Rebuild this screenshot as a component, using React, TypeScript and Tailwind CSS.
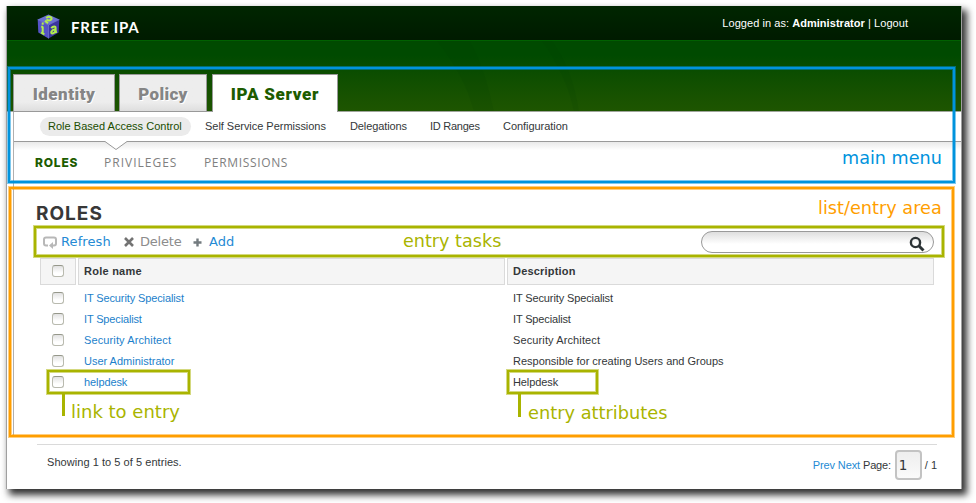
import type { ReactNode } from 'react';

const roles = [
  { name: 'IT Security Specialist', description: 'IT Security Specialist', tracking: 'tracking-[-0.12px]' },
  { name: 'IT Specialist', description: 'IT Specialist', tracking: 'tracking-[-0.15px]' },
  { name: 'Security Architect', description: 'Security Architect', tracking: 'tracking-[0.12px]' },
  { name: 'User Administrator', description: 'Responsible for creating Users and Groups', tracking: 'tracking-[-0.01px]' },
  { name: 'helpdesk', description: 'Helpdesk', tracking: 'tracking-[-0.1px]' },
];

const blueFrame = 'border-[#0093dd] shadow-[0_0_0_1px_rgba(0,147,221,0.5),inset_0_0_0_1px_rgba(0,147,221,0.5)]';
const orangeFrame = 'border-[#ff9e00] shadow-[0_0_0_1px_rgba(255,158,0,0.5),inset_0_0_0_1px_rgba(255,158,0,0.5)]';
const oliveFrame = 'border-[#a9b400] shadow-[0_0_0_1px_rgba(169,180,0,0.5),inset_0_0_0_1px_rgba(169,180,0,0.5)]';

function Frame({ className }: { className: string }) {
  return <div className={`pointer-events-none absolute border-2 ${className}`} />;
}

function Note({ className, children }: { className: string; children: ReactNode }) {
  return (
    <span className={`absolute font-['DejaVu_Sans',sans-serif] leading-[22px] tracking-normal whitespace-nowrap ${className}`}>
      {children}
    </span>
  );
}

function Checkbox() {
  return (
    <span className="block h-3 w-3 rounded-[3px] border border-[#b9baaf] border-t-[#95978a] bg-linear-to-b from-[#e2e2e2] to-white to-70%" />
  );
}

function Logo() {
  return (
    <svg className="block h-[25px] w-[23px]" viewBox="0 0 23 25">
      <path d="M11.5 0.5 22.3 5.5 11.5 11 0.7 5.5Z" fill="#6c70d4" />
      <path d="M0.7 5.5 11.5 11V24.5L1.3 18.5Z" fill="#5553c6" />
      <path d="M22.3 5.5 11.5 11V24.5L21.7 18.5Z" fill="#3b35a0" />
      <path d="M0.7 5.5 11.5 11 22.3 5.5M11.5 11V24.5" fill="none" stroke="#7b7fe0" strokeWidth=".7" />
      <g fill="none" stroke="#b2ee4c" strokeWidth="2">
        <path d="M8 6.8 11 9.2M9.2 4C11.5 1.6 15.6 3.2 14.4 5.2 13.4 7 10.4 6.6 9.6 5.4" />
        <path d="M5.7 12.5V19.5M5.7 8.6V10.8M4.2 12.3 5.7 13M4 18.5 7.4 20.4" />
        <path d="M14.2 14.2C16.2 12 18.6 11.7 18.6 14V18.2L20 17.8M18.4 15.2C14 15.6 13.2 19.8 15.6 19.5 17 19.3 18.4 17.8 18.4 16.6" />
      </g>
    </svg>
  );
}

export default function App() {
  return (
    <div className="relative h-[503px] w-[976px] overflow-hidden bg-white pt-[6px] pl-[6px] font-['Liberation_Sans',Arial,sans-serif] text-[11px] tracking-normal text-[#333739]">
      <div className="flex h-[483px] w-[956px] flex-col border-x border-[#a0a0a0] bg-white shadow-[4px_5px_7px_1px_rgba(0,0,0,0.8)]">
        <header className="flex h-[34px] shrink-0 items-start bg-linear-to-b from-[#002600] to-[#001b00] pt-[8px] text-white">
          <div className="ml-[30px]">
            <Logo />
          </div>
          <span className="ml-[11px] pt-[3px] font-['Lato',sans-serif] text-[15px] leading-[20px] font-bold tracking-[0.75px]">FREE IPA</span>
          <span className="mr-[53px] ml-auto leading-[18px] tracking-[0.05px] whitespace-pre">
            Logged in as: <b>Administrator</b> | Logout
          </span>
        </header>

        <div className="relative flex h-[72px] shrink-0 items-end overflow-hidden border-t border-[#006000] bg-linear-to-b from-[#004a00] from-20% to-[#1e5500] pl-[6px] font-['Roboto',sans-serif] text-[17px] font-black">
          <svg className="absolute inset-0 h-full w-full" viewBox="0 0 954 71">
            <path d="M430 0Q458 35 467 71H487Q479 30 463 0ZM535 0Q560 35 567 71H572Q566 28 545 0Z" fill="#003c00" opacity=".1" />
          </svg>
          <div className="absolute inset-x-0 bottom-0 h-px bg-[#a0a59c]" />
          <div className="relative flex h-[38px] w-[102px] items-center justify-center border border-[#999] bg-linear-to-b from-[#ededed] from-75% to-[#dedede] pt-[3px] tracking-[0.5px] text-[#858585] [text-shadow:1px_1px_0_#fff]">Identity</div>
          <div className="relative ml-[4px] flex h-[38px] w-[88px] items-center justify-center border border-[#999] bg-linear-to-b from-[#ededed] from-75% to-[#dedede] pt-[3px] tracking-[0.3px] text-[#858585] [text-shadow:1px_1px_0_#fff]">Policy</div>
          <div className="relative ml-[5px] flex h-[38px] w-[126px] items-center justify-center border border-b-0 border-[#999] bg-white pt-[3px] tracking-[0.7px] text-[#1d5c00]">IPA Server</div>
        </div>

        <div className="ml-[6px] flex h-[324px] shrink-0 flex-col border-l border-[#b0b0b0]">
          <nav className="flex h-[29px] shrink-0 items-center pl-[26px]">
            <span className="flex h-[19px] w-[151px] items-center rounded-full bg-[#ebebeb] pl-[8px] tracking-[0.02px] text-[#204d00]">Role Based Access Control</span>
            <span className="ml-[14px] w-[145px] tracking-[-0.03px]">Self Service Permissions</span>
            <span className="w-[80px] tracking-[-0.1px]">Delegations</span>
            <span className="w-[73px] tracking-[-0.25px]">ID Ranges</span>
            <span className="tracking-[-0.05px]">Configuration</span>
          </nav>
          <div className="relative flex h-[43px] shrink-0 items-center border-t border-[#999] bg-linear-to-b from-[#e9e9e9] to-white to-20% pl-[21px] font-['Open_Sans',sans-serif] text-[12px]">
            <svg className="absolute -top-px left-[91px] h-[9px] w-[22px]" viewBox="0 0 22 9">
              <path d="M0 0H22V.5L11 8.5 0 .5Z" fill="#fff" />
              <path d="M0 .5 11 8.5 22 .5" fill="none" stroke="#999" />
            </svg>
            <span className="w-[69px] font-['Inter',sans-serif] font-extrabold tracking-[0.8px] text-[#1d5c00]">ROLES</span>
            <span className="w-[100px] tracking-[1px] text-[#808080]">PRIVILEGES</span>
            <span className="tracking-[0.65px] text-[#808080]">PERMISSIONS</span>
          </div>

          <h1 className="ml-[22px] h-[43px] shrink-0 pt-[17px] font-['Inter',sans-serif] text-[19px] leading-[26px] font-bold tracking-[1px] text-[#383838]">ROLES</h1>

          <div className="flex h-[30px] shrink-0 items-center pl-[29px] font-['DejaVu_Sans',sans-serif] text-[13px] text-[#258ad4]">
            <svg className="h-[13px] w-[15px]" viewBox="0 0 15 13" fill="none" stroke="#b8b8b8" strokeWidth="2">
              <path d="M5 9.5H3Q1 9.5 1 7.5V3.5Q1 1.5 3 1.5H11Q13 1.5 13 3.5V7.5Q13 9.5 11 9.5H9" />
              <path d="M10 6V13L6 9.5Z" fill="#b8b8b8" stroke="none" />
            </svg>
            <span className="ml-[3px] w-[63px] tracking-[0.1px]">Refresh</span>
            <svg className="h-[10px] w-[10px]" viewBox="0 0 10 10" stroke="#737373" strokeWidth="2.6">
              <path d="M1 1 9 9M9 1 1 9" />
            </svg>
            <span className="ml-[6px] w-[53px] tracking-[-0.2px] text-[#8c8c8c]">Delete</span>
            <svg className="h-[9px] w-[9px]" viewBox="0 0 9 9" stroke="#737b7f" strokeWidth="2.4">
              <path d="M4.5 0.5V8.5M.5 4.5H8.5" />
            </svg>
            <span className="ml-[7px]">Add</span>
            <div className="mr-[27px] ml-auto flex h-[22px] w-[233px] items-center justify-end rounded-full border border-[#999] bg-linear-to-b from-[#dedede] to-white to-60% pt-[3px] pr-[8px]">
              <svg className="h-[16px] w-[16px]" viewBox="0 0 16 16" fill="none" stroke="#2d3437">
                <circle cx="6.5" cy="6.5" r="4.6" strokeWidth="2.4" />
                <path d="M9.8 9.8 14.5 14.5" strokeWidth="3" />
              </svg>
            </div>
          </div>

          <div className="mt-px ml-[26px] flex h-[27px] w-[894px] shrink-0 gap-[2px] font-bold">
            <div className="flex w-[36px] items-start justify-center border border-[#dadada] bg-[#f5f5f5] pt-[6px]"><Checkbox /></div>
            <div className="flex w-[427px] items-center border border-[#dadada] bg-[#f5f5f5] pl-[5px] tracking-[0.25px]">Role name</div>
            <div className="flex w-[427px] items-center border border-[#dadada] bg-[#f5f5f5] pl-[5px] tracking-[0.2px]">Description</div>
          </div>
          <div className="mt-[3px] ml-[38px] flex flex-col">
            {roles.map(({ name, description, tracking }) => (
              <div key={name} className={`flex h-[21px] items-start ${tracking}`}>
                <span className="pt-[4px]"><Checkbox /></span>
                <span className="ml-[20px] w-[429px] leading-[21px] text-[#1c7fcb]">{name}</span>
                <span className="leading-[21px]">{description}</span>
              </div>
            ))}
          </div>
        </div>

        <footer className="mt-[8px] ml-[30px] flex h-[44px] w-[900px] shrink-0 items-start border-t border-[#dadada] pl-[10px]">
          <span className="pt-[9px] leading-[16px] tracking-[0.05px]">Showing 1 to 5 of 5 entries.</span>
          <div className="ml-auto flex items-center pt-[5px]">
            <span className="tracking-[-0.12px] text-[#258ad4]">Prev Next</span>
            <span className="ml-[3px] tracking-[-0.2px]">Page:</span>
            <span className="ml-[4px] flex h-[30px] w-[27px] items-center rounded-[4px] border-2 border-[#c3c3c3] bg-linear-to-b from-[#eeeeee] to-[#fafafa] pl-[2px] font-['DejaVu_Sans',sans-serif] text-[13.5px]">1</span>
            <span className="ml-[3px] pt-px whitespace-pre">/ 1</span>
          </div>
        </footer>
      </div>

      <Frame className={`top-[67px] left-[8px] h-[116px] w-[947px] ${blueFrame}`} />
      <Frame className={`top-[187px] left-[9px] h-[250px] w-[945px] ${orangeFrame}`} />
      <Frame className={`top-[226px] left-[34px] h-[31px] w-[910px] ${oliveFrame}`} />
      <Frame className={`top-[370px] left-[47px] h-[24px] w-[143px] ${oliveFrame}`} />
      <Frame className={`top-[370px] left-[507px] h-[24px] w-[91px] ${oliveFrame}`} />
      <div className="absolute top-[394px] left-[62px] h-[22px] w-[3px] bg-[#a9b400]" />
      <div className="absolute top-[394px] left-[518px] h-[23px] w-[3px] bg-[#a9b400]" />
      <Note className="top-[147px] left-[842px] text-[17.6px] text-[#0093dd]">main menu</Note>
      <Note className="top-[197px] left-[818px] text-[17.7px] text-[#ff9e00]">list/entry area</Note>
      <Note className="top-[230px] left-[403px] text-[17.6px] text-[#a9b400]">entry tasks</Note>
      <Note className="top-[401px] left-[71px] text-[18px] text-[#a9b400]">link to entry</Note>
      <Note className="top-[402px] left-[528px] text-[17.8px] text-[#a9b400]">entry attributes</Note>
    </div>
  );
}
